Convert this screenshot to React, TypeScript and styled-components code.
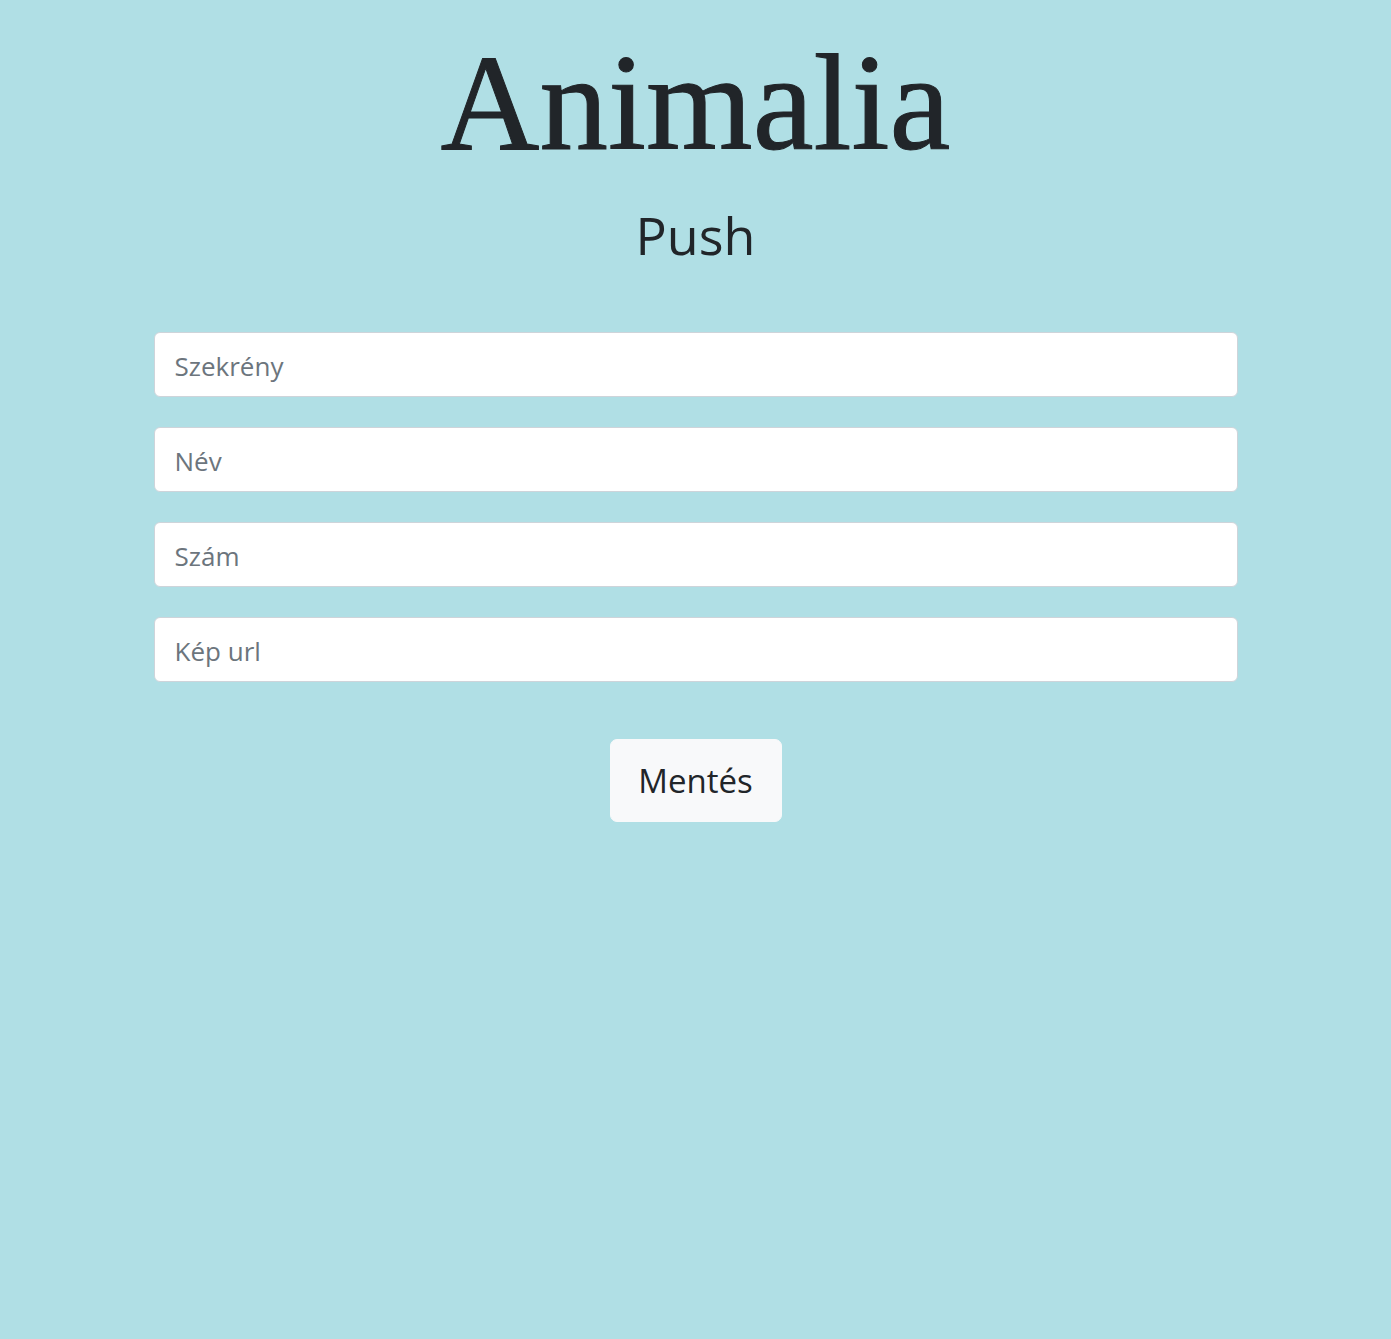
import React from "react";
import styled, { createGlobalStyle } from "styled-components";

const GlobalStyle = createGlobalStyle`
  html, body {
    margin: 0;
    padding: 0;
    background: #b0dfe5;
    min-height: 100%;
  }
  body {
    font-family: "Open Sans", "Noto Sans", sans-serif;
    color: #212529;
  }
`;

const Page = styled.div`
  min-height: 1339px;
  background: #b0dfe5;
  display: flex;
  flex-direction: column;
  align-items: center;
`;

const Title = styled.h1`
  margin: 28px 0 0;
  font-family: "Liberation Serif", "DejaVu Serif", serif;
  font-weight: 400;
  font-size: 137px;
  line-height: 1.1;
  color: #212529;
  -webkit-text-stroke: 1px #212529;
`;

const Subtitle = styled.h2`
  margin: 25px 0 0;
  font-family: "Open Sans", "Noto Sans", sans-serif;
  font-weight: 400;
  font-size: 52px;
  line-height: 1.2;
  color: #212529;
`;

const Form = styled.form`
  width: 1084px;
  margin-top: 66px;
  display: flex;
  flex-direction: column;
  gap: 30px;
`;

const Field = styled.input`
  box-sizing: border-box;
  width: 100%;
  height: 65px;
  padding: 3px 20px 0;
  border: 1px solid #ced4da;
  border-radius: 6px;
  background: #fff;
  font-family: "Open Sans", "Noto Sans", sans-serif;
  font-size: 26px;
  color: #212529;
  outline: none;

  &::placeholder {
    color: #6c757d;
  }
`;

const Actions = styled.div`
  display: flex;
  justify-content: center;
  margin-top: 27px;
`;

const SaveButton = styled.button`
  box-sizing: border-box;
  width: 172px;
  height: 83px;
  border: 1px solid #f8f9fa;
  border-radius: 7px;
  background: #f8f9fa;
  color: #212529;
  font-family: "Open Sans", "Noto Sans", sans-serif;
  font-size: 33px;
  cursor: pointer;
`;

const fields = ["Szekrény", "Név", "Szám", "Kép url"];

export default function App() {
  return (
    <>
      <GlobalStyle />
      <Page>
        <Title>Animalia</Title>
        <Subtitle>Push</Subtitle>
        <Form onSubmit={(e) => e.preventDefault()}>
          {fields.map((f) => (
            <Field key={f} type="text" placeholder={f} />
          ))}
          <Actions>
            <SaveButton type="submit">Mentés</SaveButton>
          </Actions>
        </Form>
      </Page>
    </>
  );
}
